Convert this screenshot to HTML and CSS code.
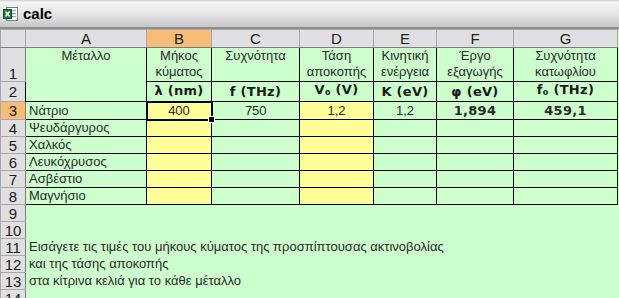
FILE: index.html
```html
<!DOCTYPE html>
<html lang="el">
<head>
    <meta charset="UTF-8">
    <title>calc</title>
    <link rel="stylesheet" href="styles.css">
</head>
<body>
    <div class="titlebar">
        <svg class="xl-icon" width="16" height="16" viewBox="0 0 16 16">
            <rect x="3.5" y="1.5" width="11" height="13" fill="#fff" stroke="#6b7f99"/>
            <line x1="9" y1="4.5" x2="13" y2="4.5" stroke="#8aa0c0"/>
            <line x1="9" y1="7.5" x2="13" y2="7.5" stroke="#8aa0c0"/>
            <line x1="9" y1="10.5" x2="13" y2="10.5" stroke="#8aa0c0"/>
            <rect x="0.5" y="3.5" width="8" height="9" fill="#1f7a3a" stroke="#0f4d22"/>
            <path d="M2.5 5.5 L6.5 10.5 M6.5 5.5 L2.5 10.5" stroke="#fff" stroke-width="1.4"/>
        </svg>
        <span class="title">calc</span>
    </div>

    <table class="sheet">
        <colgroup>
            <col class="w-hdr"><col class="w-a"><col class="w-b"><col class="w-c">
            <col class="w-d"><col class="w-e"><col class="w-f"><col class="w-g">
        </colgroup>
        <tr class="colhdr">
            <th class="corner"></th>
            <th>A</th><th class="hl">B</th><th>C</th><th>D</th><th>E</th><th>F</th><th>G</th>
        </tr>
        <tr class="r-tall">
            <th class="rowhdr bottom">1</th>
            <td class="g top" rowspan="2">Μέταλλο</td>
            <td class="g top">Μήκος<br>κύματος</td>
            <td class="g top">Συχνότητα</td>
            <td class="g top">Τάση<br>αποκοπής</td>
            <td class="g top">Κινητική<br>ενέργεια</td>
            <td class="g top">Έργο<br>εξαγωγής</td>
            <td class="g top">Συχνότητα<br>κατωφλίου</td>
        </tr>
        <tr>
            <th class="rowhdr">2</th>
            <td class="g unit">λ (nm)</td>
            <td class="g unit">f (THz)</td>
            <td class="g unit">V<sub>o</sub> (V)</td>
            <td class="g unit">K (eV)</td>
            <td class="g unit">φ (eV)</td>
            <td class="g unit">f<sub>o</sub> (THz)</td>
        </tr>
        <tr>
            <th class="rowhdr hl">3</th>
            <td class="g name">Νάτριο</td>
            <td class="y num active">400</td>
            <td class="g num">750</td>
            <td class="y num">1,2</td>
            <td class="g num">1,2</td>
            <td class="g num bold">1,894</td>
            <td class="g num bold">459,1</td>
        </tr>
        <tr>
            <th class="rowhdr">4</th>
            <td class="g name">Ψευδάργυρος</td>
            <td class="y"></td><td class="g"></td><td class="y"></td><td class="g"></td><td class="g"></td><td class="g"></td>
        </tr>
        <tr>
            <th class="rowhdr">5</th>
            <td class="g name">Χαλκός</td>
            <td class="y"></td><td class="g"></td><td class="y"></td><td class="g"></td><td class="g"></td><td class="g"></td>
        </tr>
        <tr>
            <th class="rowhdr">6</th>
            <td class="g name">Λευκόχρυσος</td>
            <td class="y"></td><td class="g"></td><td class="y"></td><td class="g"></td><td class="g"></td><td class="g"></td>
        </tr>
        <tr>
            <th class="rowhdr">7</th>
            <td class="g name">Ασβέστιο</td>
            <td class="y"></td><td class="g"></td><td class="y"></td><td class="g"></td><td class="g"></td><td class="g"></td>
        </tr>
        <tr>
            <th class="rowhdr">8</th>
            <td class="g name">Μαγνήσιο</td>
            <td class="y"></td><td class="g"></td><td class="y"></td><td class="g"></td><td class="g"></td><td class="g"></td>
        </tr>
        <tr><th class="rowhdr">9</th><td class="free" colspan="7"></td></tr>
        <tr><th class="rowhdr">10</th><td class="free" colspan="7"></td></tr>
        <tr><th class="rowhdr">11</th><td class="free" colspan="7">Εισάγετε τις τιμές του μήκους κύματος της προσπίπτουσας ακτινοβολίας</td></tr>
        <tr><th class="rowhdr">12</th><td class="free" colspan="7">και της τάσης αποκοπής</td></tr>
        <tr><th class="rowhdr">13</th><td class="free" colspan="7">στα κίτρινα κελιά για το κάθε μέταλλο</td></tr>
        <tr><th class="rowhdr">14</th><td class="free" colspan="7"></td></tr>
    </table>
</body>
</html>
```

FILE: styles.css
```css
body {
    margin: 0;
    background-color: #ccffcc;
    font-family: "Liberation Sans", Arial, sans-serif;
    overflow: hidden;
}
.titlebar {
    height: 27px;
    display: flex;
    align-items: center;
    gap: 4px;
    padding-left: 3px;
    background: linear-gradient(#c9c9c9 0, #f6f6f6 2px, #e4e4e4 55%, #c6c6c6 100%);
    border-bottom: 2px solid #8e8e8e;
}
.xl-icon {
    flex: none;
}
.title {
    font-size: 15px;
    font-weight: bold;
    color: #000;
}
.sheet {
    border-collapse: collapse;
    table-layout: fixed;
    width: 617px;
}
.w-hdr { width: 25px; }
.w-a { width: 121px; }
.w-b { width: 65px; }
.w-c { width: 88px; }
.w-d { width: 74px; }
.w-e { width: 63px; }
.w-f { width: 77px; }
.w-g { width: 104px; }

.sheet tr {
    height: 17px;
}
.sheet tr.colhdr {
    height: 18px;
}
.sheet tr.r-tall {
    height: 34px;
}
.sheet th {
    background-color: #e0e0e2;
    font-weight: normal;
    font-size: 15px;
    line-height: 15px;
    color: #202020;
    padding: 0;
    text-align: center;
    border: 1px solid #a8a8ac;
}
.colhdr th {
    border-bottom-color: #7c7c80;
}
.sheet th.rowhdr {
    border-right-color: #7c7c80;
}
.sheet th.hl {
    background-color: #f7bd78;
}
.sheet th.bottom {
    vertical-align: bottom;
}
.sheet td {
    font-size: 13px;
    line-height: 16px;
    color: #2a2a2a;
    padding: 0 3px;
    border: 1px solid #000;
    white-space: nowrap;
    overflow: visible;
}
.g {
    background-color: #ccffcc;
}
.y {
    background-color: #ffff99;
}
.top {
    vertical-align: top;
    text-align: center;
}
.unit {
    text-align: center;
    font-family: "DejaVu Sans", Verdana, sans-serif;
    font-weight: bold;
    font-size: 13px !important;
    letter-spacing: 0.3px;
    color: #1a1a1a !important;
}
.unit sub {
    font-size: 8px;
    vertical-align: -1px;
}
.num {
    text-align: center;
}
.bold {
    font-family: "DejaVu Sans", Verdana, sans-serif;
    font-weight: bold;
    font-size: 13px !important;
    letter-spacing: 0.3px;
}
.name {
    text-align: left;
}
.sheet td.active {
    border: 2px solid #000;
    position: relative;
}
.sheet td.active::after {
    content: "";
    position: absolute;
    right: -4px;
    bottom: -4px;
    width: 5px;
    height: 5px;
    background: #000;
    border: 1px solid #fff;
}
.sheet td.free {
    border: none;
    background-color: #ccffcc;
    text-align: left;
}
```
